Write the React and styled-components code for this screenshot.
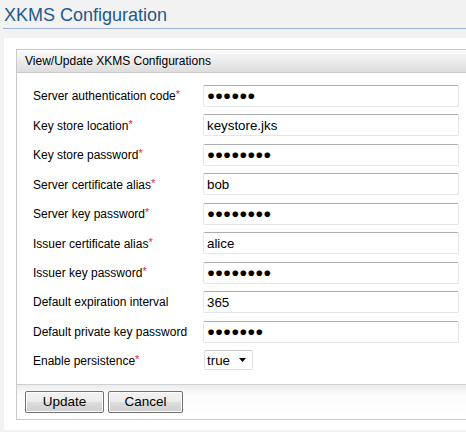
import React from "react";
import styled, { createGlobalStyle } from "styled-components";

const GlobalStyle = createGlobalStyle`
  html, body {
    margin: 0;
    padding: 0;
    background: #f2f2f2;
    overflow: hidden;
  }
  body {
    font-family: "Liberation Sans", Arial, sans-serif;
    font-size: 12px;
    color: #000;
  }
`;

const fields = [
  { label: "Server authentication code", required: true, value: "●●●●●●" },
  { label: "Key store location", required: true, value: "keystore.jks" },
  { label: "Key store password", required: true, value: "●●●●●●●●" },
  { label: "Server certificate alias", required: true, value: "bob" },
  { label: "Server key password", required: true, value: "●●●●●●●●" },
  { label: "Issuer certificate alias", required: true, value: "alice" },
  { label: "Issuer key password", required: true, value: "●●●●●●●●" },
  { label: "Default expiration interval", required: false, value: "365" },
  { label: "Default private key password", required: false, value: "●●●●●●●" },
];

export default function App() {
  return (
    <>
      <GlobalStyle />
      <Page>
        <Title>XKMS Configuration</Title>
        <Panel>
          <Box>
            <BoxHeader>View/Update XKMS Configurations</BoxHeader>
            <Form>
              {fields.map((f) => (
                <Row key={f.label}>
                  <Label>
                    {f.label}
                    {f.required && <Required>*</Required>}
                  </Label>
                  <TextInput type="text" defaultValue={f.value} />
                </Row>
              ))}
              <Row $short>
                <Label>
                  Enable persistence<Required>*</Required>
                </Label>
                <SelectBox>
                  <Select defaultValue="true">
                    <option value="true">true</option>
                    <option value="false">false</option>
                  </Select>
                  <svg width="7" height="4" viewBox="0 0 7 4">
                    <path d="M0 0 H7 L3.5 4 Z" fill="#000" />
                  </svg>
                </SelectBox>
              </Row>
            </Form>
            <Footer>
              <Button $width={79}>Update</Button>
              <Button $width={75}>Cancel</Button>
            </Footer>
          </Box>
        </Panel>
      </Page>
    </>
  );
}

const Page = styled.div`
  width: 100vw;
  height: 100vh;
  overflow: hidden;
`;

const Title = styled.h1`
  margin: 0 0 0 3px;
  padding: 4px 0 0 1px;
  height: 24px;
  font-size: 18px;
  font-weight: normal;
  line-height: 22px;
  color: #1f5a8c;
  border-bottom: 1px solid #9db3d6;
`;

const Panel = styled.div`
  margin: 9px -30px 0 4px;
  padding: 11px 0 10px 12px;
  background: #fff;
`;

const Box = styled.div`
  border: 1px solid #c9c9c9;
`;

const BoxHeader = styled.div`
  height: 22px;
  line-height: 22px;
  padding-left: 8px;
  font-size: 12px;
  background: linear-gradient(#fbfbfb, #dddddd);
  border-bottom: 1px solid #c9c9c9;
`;

const Form = styled.div`
  display: flex;
  flex-direction: column;
  padding: 8px 0 10px 16px;
`;

const Row = styled.div`
  display: grid;
  grid-template-columns: 170px auto;
  align-items: center;
  height: ${(p) => (p.$short ? "27px" : "29.5px")};
`;

const Label = styled.div`
  font-size: 12px;
  white-space: nowrap;
`;

const Required = styled.span`
  color: #e8232e;
  font-size: 11px;
  vertical-align: 2px;
`;

const TextInput = styled.input`
  box-sizing: border-box;
  width: 256px;
  height: 22px;
  margin: 0;
  padding: 0 3px;
  font-family: "Liberation Sans", Arial, sans-serif;
  font-size: 13.33px;
  color: #000;
  background: #fff;
  border: 1px solid #e2e6ea;
  border-top-color: #abadb3;
  border-radius: 2px;
  outline: none;
`;

const SelectBox = styled.label`
  box-sizing: border-box;
  display: flex;
  align-items: center;
  width: 49px;
  height: 20px;
  margin-left: 1px;
  padding-right: 6px;
  border: 1px solid #dcdfe3;
  border-top-color: #c4c7cc;
  border-radius: 2px;
  background: #fff;
`;

const Select = styled.select`
  appearance: none;
  flex: 1;
  min-width: 0;
  height: 18px;
  margin: 0;
  padding: 0 0 0 2px;
  border: none;
  background: transparent;
  outline: none;
  font-family: "Liberation Sans", Arial, sans-serif;
  font-size: 13.33px;
  color: #000;
`;

const Footer = styled.div`
  display: flex;
  gap: 4px;
  height: 35px;
  padding: 6px 0 0 8px;
  box-sizing: border-box;
  border-top: 1px solid #d0d0d0;
  background: linear-gradient(#ececec, #fbfbfb 10px, #fff);
`;

const Button = styled.button`
  box-sizing: border-box;
  width: ${(p) => p.$width}px;
  height: 22px;
  margin: 0;
  padding: 0;
  font-family: "Liberation Sans", Arial, sans-serif;
  font-size: 13.5px;
  color: #000;
  border: 1px solid #707070;
  border-radius: 2px;
  box-shadow: inset 0 0 0 1px #fcfcfc;
  background: linear-gradient(#f2f2f2 0%, #ebebeb 50%, #dddddd 51%, #cfcfcf 100%);
`;
